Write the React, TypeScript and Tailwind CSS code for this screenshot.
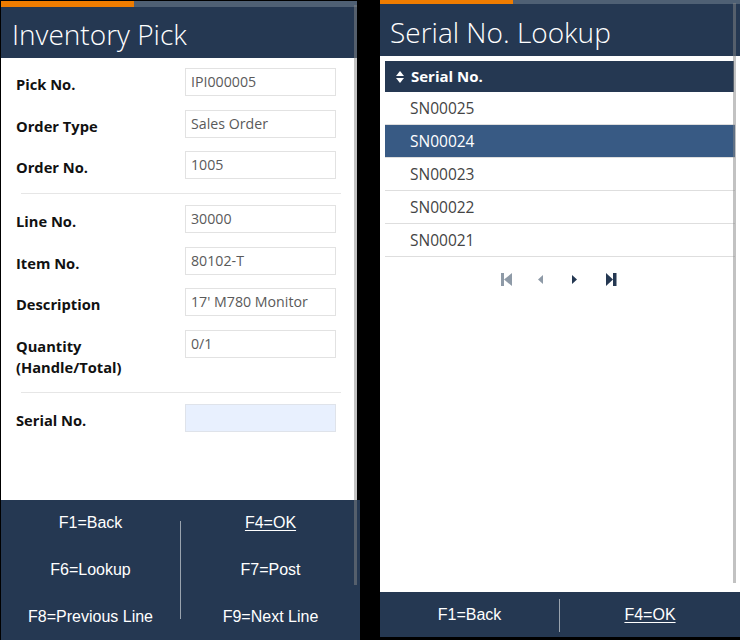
import React from 'react'

const NAVY = 'bg-[#253852]'

type Field = { label: string[]; value: string; active?: boolean }

const groupA: Field[] = [
  { label: ['Pick No.'], value: 'IPI000005' },
  { label: ['Order Type'], value: 'Sales Order' },
  { label: ['Order No.'], value: '1005' },
]

const groupB: Field[] = [
  { label: ['Line No.'], value: '30000' },
  { label: ['Item No.'], value: '80102-T' },
  { label: ['Description'], value: "17' M780 Monitor" },
  { label: ['Quantity', '(Handle/Total)'], value: '0/1' },
]

const serials = ['SN00025', 'SN00024', 'SN00023', 'SN00022', 'SN00021']

function FormRow({ f }: { f: Field }) {
  return (
    <div className="flex items-start">
      <div className="w-[169px] pt-[6px] text-[14.7px] font-bold leading-[21px] text-[#111]">
        {f.label.map(l => (
          <div key={l}>{l}</div>
        ))}
      </div>
      <div
        className={
          'flex h-[28px] w-[151px] items-center border pl-[5px] text-[14.2px] text-[#5a5a5a] ' +
          (f.active ? 'border-[#dfe3ea] bg-[#e8f0fe]' : 'border-[#e2e2e2] bg-white')
        }
      >
        {f.value}
      </div>
    </div>
  )
}

function Divider() {
  return <div className="mb-[11px] ml-[20px] mt-[14px] h-px w-[320px] bg-[#e6e6e6]" />
}

function TopBar({ h }: { h: string }) {
  return (
    <div className={'flex ' + h}>
      <div className="w-[133px] bg-[#ef7c00]" />
      <div className="flex-1 bg-[#4f6074]" />
    </div>
  )
}

function SortIcon() {
  return (
    <svg width="8" height="12" viewBox="0 0 8 12" className="shrink-0">
      <path d="M4 0 L8 5 L0 5 Z" fill="white" />
      <path d="M0 7 L8 7 L4 12 Z" fill="white" />
    </svg>
  )
}

function Pager() {
  const gray = '#8e9aa7'
  const dark = '#253852'
  return (
    <div className="ml-[111px] mt-[15px] flex h-[14px] items-center">
      <div className="flex w-[20px] justify-center">
        <svg width="11" height="13" viewBox="0 0 11 13">
          <rect x="0" y="0" width="3" height="13" fill={gray} />
          <path d="M11 0 L11 13 L3 6.5 Z" fill={gray} />
        </svg>
      </div>
      <div className="ml-[14.5px] flex w-[20px] justify-center">
        <svg width="5" height="9" viewBox="0 0 5 9">
          <path d="M5 0 L5 9 L0 4.5 Z" fill={gray} />
        </svg>
      </div>
      <div className="ml-[14px] flex w-[20px] justify-center">
        <svg width="5" height="9" viewBox="0 0 5 9">
          <path d="M0 0 L0 9 L5 4.5 Z" fill={dark} />
        </svg>
      </div>
      <div className="ml-[16.5px] flex w-[20px] justify-center">
        <svg width="11" height="13" viewBox="0 0 11 13">
          <path d="M0 0 L0 13 L7 6.5 Z" fill={dark} />
          <rect x="7" y="0" width="3.5" height="13" fill={dark} />
        </svg>
      </div>
    </div>
  )
}

function Key({ children, u, w }: { children: React.ReactNode; u?: boolean; w?: string }) {
  return (
    <div className={'flex items-center justify-center ' + (w || 'flex-1') + (u ? ' underline underline-offset-2' : '')}>
      {children}
    </div>
  )
}

export default function App() {
  return (
    <div className="flex h-[640px] w-[740px] bg-black" style={{ fontFamily: '"Open Sans", sans-serif' }}>
      {/* Inventory Pick */}
      <div className="relative ml-px mt-px flex w-[359px] flex-col">
        <div className="flex h-[499px] w-[356px] flex-col bg-white">
          <TopBar h="h-[6px]" />
          <div className={'h-[51px] pl-[11px] pt-[8px] ' + NAVY}>
            <div className="text-[28px] font-light leading-[38px] text-white">Inventory Pick</div>
          </div>
          <div className="pl-[15px] pt-[10px]">
            <div className="flex flex-col gap-[13.5px]">
              {groupA.map(f => (
                <FormRow key={f.label[0]} f={f} />
              ))}
            </div>
          </div>
          <Divider />
          <div className="pl-[15px]">
            <div className="flex flex-col gap-[13.5px]">
              {groupB.map(f => (
                <FormRow key={f.label[0]} f={f} />
              ))}
            </div>
          </div>
          <Divider />
          <div className="pl-[15px]">
            <FormRow f={{ label: ['Serial No.'], value: '', active: true }} />
          </div>
        </div>
        <div
          className={'flex h-[140px] w-[359px] text-[16px] text-white ' + NAVY}
          style={{ fontFamily: '"Liberation Sans", Arial, sans-serif' }}
        >
          <div className="flex w-[179px] flex-col">
            <Key>F1=Back</Key>
            <Key>F6=Lookup</Key>
            <Key>F8=Previous Line</Key>
          </div>
          <div className="my-[21px] w-px bg-[#9aa3ae]" />
          <div className="flex flex-1 flex-col">
            <Key u>F4=OK</Key>
            <Key>F7=Post</Key>
            <Key>F9=Next Line</Key>
          </div>
        </div>
        <div className="absolute left-[353px] top-[4px] h-[580px] w-[3px] bg-[#858585]/50" />
      </div>

      {/* Serial No. Lookup */}
      <div className="relative ml-[20px] flex w-[360px] flex-col">
        <TopBar h="h-[4px]" />
        <div className={'h-[52px] pl-[10px] pt-[9px] ' + NAVY}>
          <div className="text-[28px] font-light leading-[38px] text-white">Serial No. Lookup</div>
        </div>
        <div className="h-[536px] bg-white px-[5px] pt-[5px]">
          <div className={'flex h-[31px] w-[349px] items-center gap-[7px] pl-[11px] ' + NAVY}>
            <SortIcon />
            <span className="text-[15px] font-bold text-white">Serial No.</span>
          </div>
          {serials.map(s => (
            <div
              key={s}
              className={
                'flex h-[33px] items-center border-b border-[#dedede] pl-[25px] pt-[2px] text-[15.5px] ' +
                (s === 'SN00024' ? 'bg-[#385a84] text-white' : 'text-[#444]')
              }
            >
              {s}
            </div>
          ))}
          <Pager />
        </div>
        <div
          className={'flex h-[45px] text-[16px] text-white ' + NAVY}
          style={{ fontFamily: '"Liberation Sans", Arial, sans-serif' }}
        >
          <Key w="w-[179px]">F1=Back</Key>
          <div className="mb-[5px] mt-[7px] w-px bg-[#9aa3ae]" />
          <Key u>F4=OK</Key>
        </div>
        <div className="absolute left-[353px] top-[3px] h-[580px] w-[3px] bg-[#858585]/50" />
      </div>
    </div>
  )
}
